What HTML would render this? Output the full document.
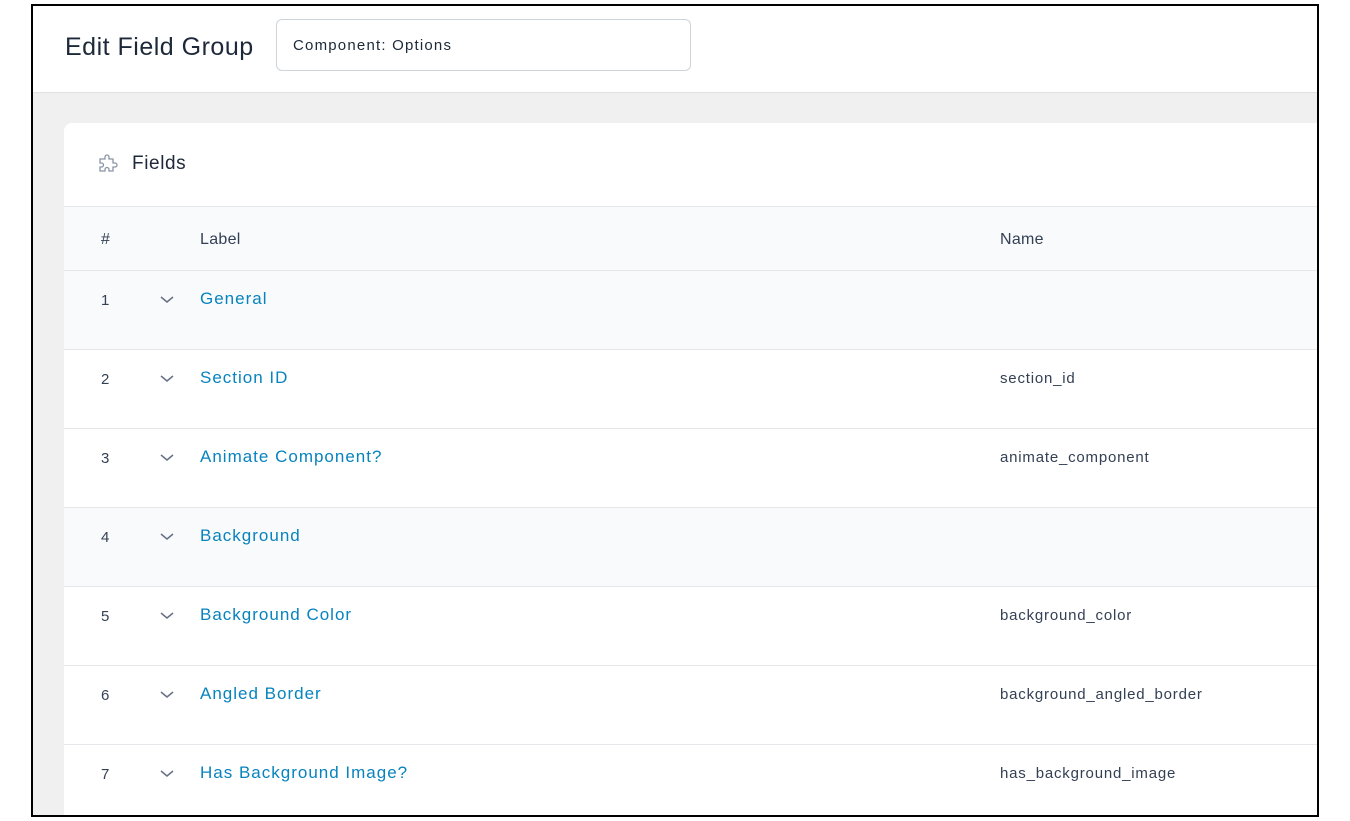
<!DOCTYPE html>
<html><head><style>
*{margin:0;padding:0;box-sizing:border-box}
body{width:1350px;height:821px;background:#fff;font-family:"Liberation Sans",sans-serif;position:relative;overflow:hidden}
.frame{position:absolute;left:31px;top:4px;width:1288px;height:813px;border:2px solid #000;overflow:hidden;background:#f0f0f1}
.hdr{position:absolute;left:0;top:0;right:0;height:87px;background:#fff;border-bottom:1px solid #e2e2e4}
.hdr h1{position:absolute;left:32px;top:27px;font-size:25px;letter-spacing:0.5px;font-weight:400;color:#1d2939;}
.inp{position:absolute;left:243px;top:13px;width:415px;height:52px;border:1px solid #cfd3da;border-radius:6px;font-size:15px;letter-spacing:1.2px;color:#1d2939;padding:17px 16px}
.card{position:absolute;left:31px;top:117px;width:1300px;height:720px;background:#fff;border-top-left-radius:8px}
.ch{height:84px;border-bottom:1px solid #e5e7eb;position:relative}
.ch span{position:absolute;left:68px;top:30px;font-size:19px;letter-spacing:0.6px;color:#1d2939}
.ch svg{position:absolute;left:32px;top:30px}
.th{height:64px;background:#f9fafb;border-bottom:1px solid #e5e7eb;position:relative;font-size:16px;color:#344054}
.row{height:79px;border-bottom:1px solid #e5e7eb;position:relative;font-size:15px;color:#344054}
.g{background:#f9fafb}
.n{position:absolute;left:37px;top:21px}
.th .n,.th .l,.th .nm{top:24px}
.l{position:absolute;left:136px;top:18px;color:#0783be;font-size:17px;letter-spacing:1px;font-weight:500}
.th .l{color:#344054;font-size:16px;letter-spacing:0.3px}
.nm{position:absolute;left:936px;top:20px;font-size:15px;letter-spacing:0.8px;color:#344054}
.th .nm{font-size:16px;letter-spacing:0.3px}
.c{position:absolute;left:95px;top:21px}
</style></head><body>
<div class="frame">
<div class="hdr"><h1>Edit Field Group</h1><div class="inp">Component: Options</div></div>
<div class="card">
<div class="ch"><svg width="24" height="24" viewBox="0 0 24 24" fill="none" stroke="#8a94a6" stroke-width="1.3"><path d="M9 4a2 2 0 0 1 4 0v2h4v4h2a2 2 0 0 1 0 4h-2v4h-4v-1.5a2 2 0 0 0-4 0V18H4v-4h1.5a2 2 0 0 0 0-4H4V6h5z"/></svg><span>Fields</span></div>
<div class="th"><span class="n">#</span><span class="l">Label</span><span class="nm">Name</span></div>
<div class="row g"><span class="n">1</span><svg class="c" width="16" height="16" viewBox="0 0 16 16"><path d="M2 5l6 5 6-5" stroke="#667085" stroke-width="1.5" fill="none"/></svg><span class="l">General</span></div>
<div class="row"><span class="n">2</span><svg class="c" width="16" height="16" viewBox="0 0 16 16"><path d="M2 5l6 5 6-5" stroke="#667085" stroke-width="1.5" fill="none"/></svg><span class="l">Section ID</span><span class="nm">section_id</span></div>
<div class="row"><span class="n">3</span><svg class="c" width="16" height="16" viewBox="0 0 16 16"><path d="M2 5l6 5 6-5" stroke="#667085" stroke-width="1.5" fill="none"/></svg><span class="l">Animate Component?</span><span class="nm">animate_component</span></div>
<div class="row g"><span class="n">4</span><svg class="c" width="16" height="16" viewBox="0 0 16 16"><path d="M2 5l6 5 6-5" stroke="#667085" stroke-width="1.5" fill="none"/></svg><span class="l">Background</span></div>
<div class="row"><span class="n">5</span><svg class="c" width="16" height="16" viewBox="0 0 16 16"><path d="M2 5l6 5 6-5" stroke="#667085" stroke-width="1.5" fill="none"/></svg><span class="l">Background Color</span><span class="nm">background_color</span></div>
<div class="row"><span class="n">6</span><svg class="c" width="16" height="16" viewBox="0 0 16 16"><path d="M2 5l6 5 6-5" stroke="#667085" stroke-width="1.5" fill="none"/></svg><span class="l">Angled Border</span><span class="nm">background_angled_border</span></div>
<div class="row"><span class="n">7</span><svg class="c" width="16" height="16" viewBox="0 0 16 16"><path d="M2 5l6 5 6-5" stroke="#667085" stroke-width="1.5" fill="none"/></svg><span class="l">Has Background Image?</span><span class="nm">has_background_image</span></div>
</div>
</div>
</body></html>
